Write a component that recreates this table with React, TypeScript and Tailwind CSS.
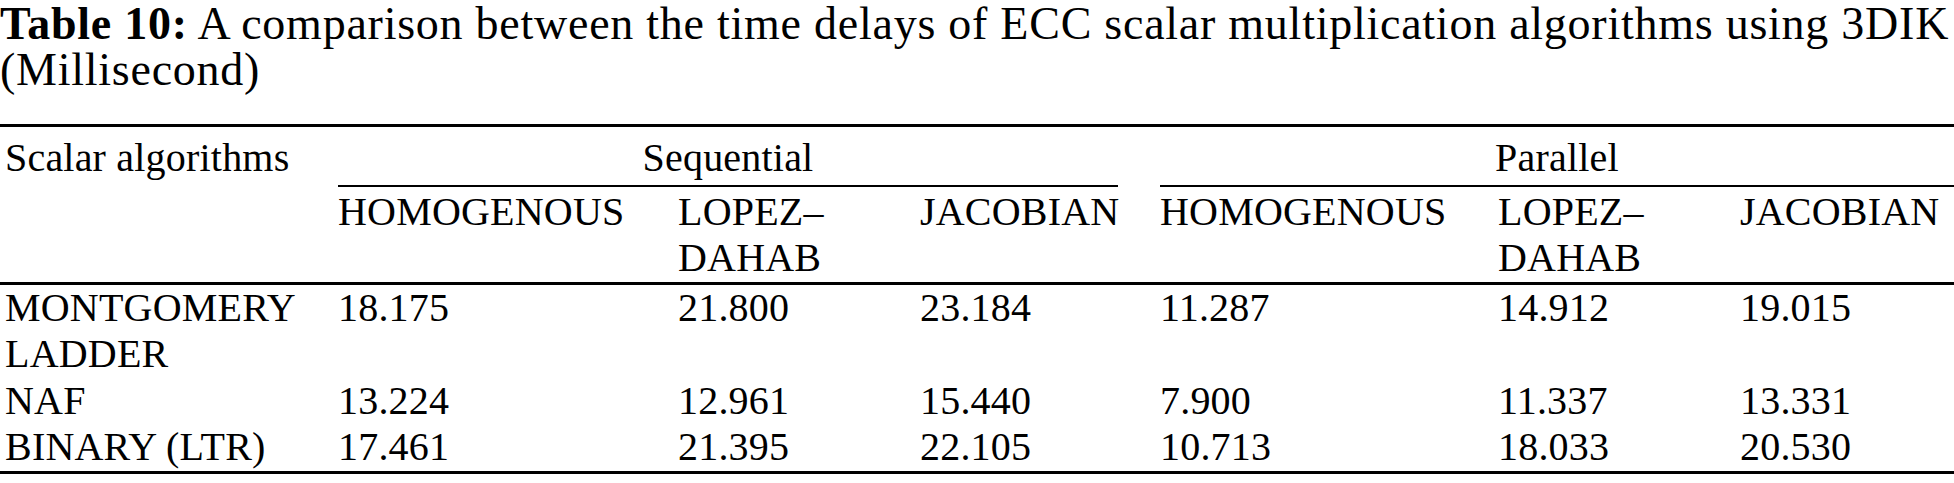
import React from "react";

const cols = "grid grid-cols-[338px_340px_242px_240px_338px_242px_1fr]";

const rows: { label: React.ReactNode; values: string[] }[] = [
  {
    label: (
      <>
        MONTGOMERY
        <br />
        LADDER
      </>
    ),
    values: ["18.175", "21.800", "23.184", "11.287", "14.912", "19.015"],
  },
  { label: "NAF", values: ["13.224", "12.961", "15.440", "7.900", "11.337", "13.331"] },
  { label: "BINARY (LTR)", values: ["17.461", "21.395", "22.105", "10.713", "18.033", "20.530"] },
];

const subHeads: React.ReactNode[] = [
  "HOMOGENOUS",
  <>
    LOPEZ–
    <br />
    DAHAB
  </>,
  "JACOBIAN",
  "HOMOGENOUS",
  <>
    LOPEZ–
    <br />
    DAHAB
  </>,
  "JACOBIAN",
];

export default function App() {
  return (
    <div
      className="w-[1954px] h-[483px] bg-white text-black overflow-hidden"
      style={{ fontFamily: '"Liberation Serif", "Times New Roman", serif' }}
    >
      <div className="text-[46px] leading-[46px] tracking-[0.75px] pt-[1px]">
        <div className="whitespace-nowrap">
          <span className="font-bold">Table 10:</span> A comparison between the time delays of ECC scalar
          multiplication algorithms using 3DIK
        </div>
        <div className="whitespace-nowrap">(Millisecond)</div>
      </div>

      <div className="mt-[31px] border-t-[3px] border-black text-[40px] leading-[46.5px] tracking-[0.2px]">
        {/* header row 1 */}
        <div className={`${cols} pt-[8px]`}>
          <div className="pl-[5px] whitespace-nowrap">Scalar algorithms</div>
          <div className="col-span-3 mr-[42px] text-center border-b-2 border-black pb-[3px]">Sequential</div>
          <div className="col-span-3 text-center border-b-2 border-black pb-[3px]">Parallel</div>
        </div>
        {/* header row 2 */}
        <div className={`${cols} pt-[2px] border-b-[3px] border-black`}>
          <div />
          {subHeads.map((h, i) => (
            <div key={i} className="whitespace-nowrap">
              {h}
            </div>
          ))}
        </div>
        {/* body */}
        <div className="border-b-[3px] border-black">
          {rows.map((r, i) => (
            <div key={i} className={cols}>
              <div className="pl-[5px] whitespace-nowrap">{r.label}</div>
              {r.values.map((v, j) => (
                <div key={j}>{v}</div>
              ))}
            </div>
          ))}
        </div>
      </div>
    </div>
  );
}
